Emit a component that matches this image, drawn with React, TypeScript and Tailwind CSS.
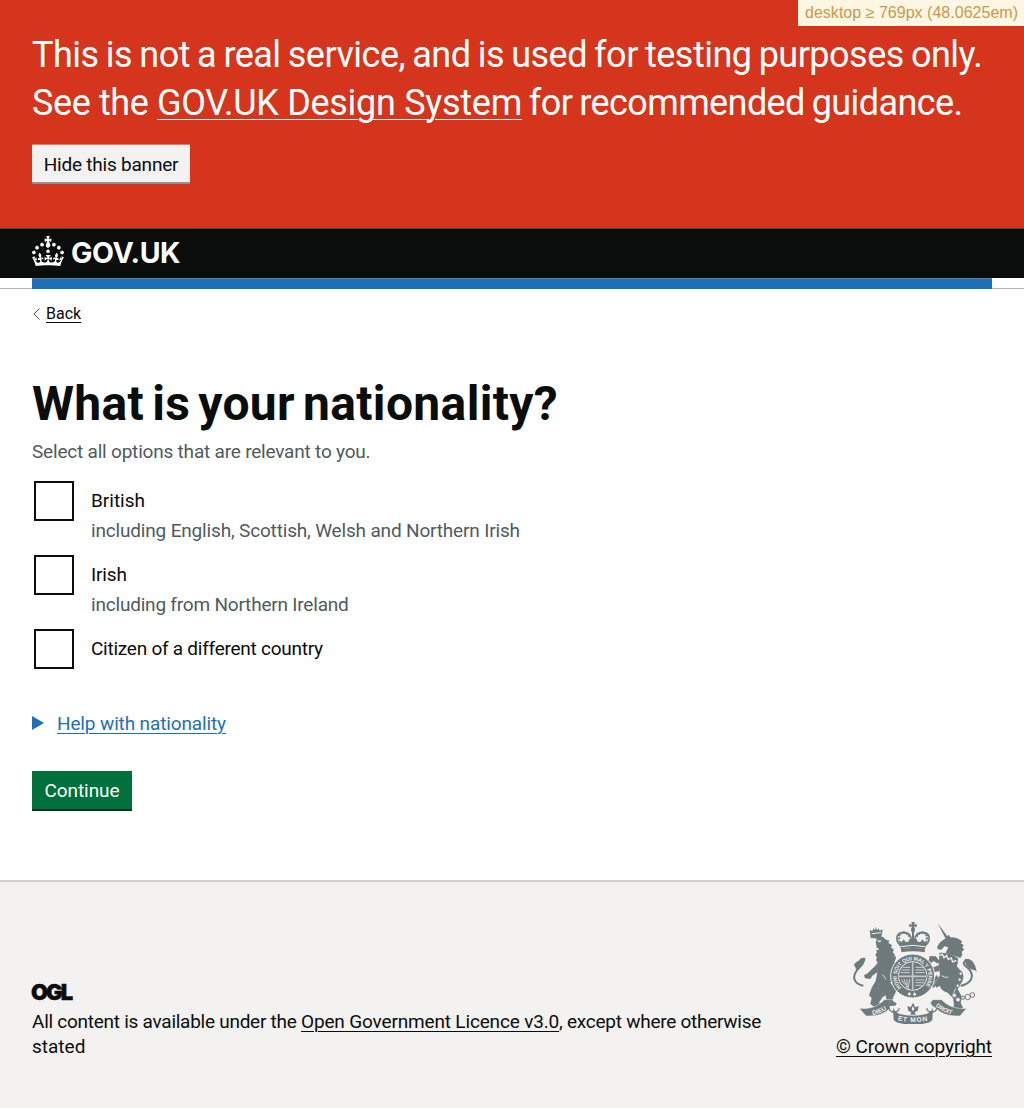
import type { ReactNode } from "react";

function Crown() {
  return (
    <svg viewBox="0 0 32 30" className="h-[30px] w-8 shrink-0" fill="currentColor" aria-hidden="true">
      <path d="M22.6 10.4c-1 .4-2-.1-2.4-1-.4-.9.1-2 1-2.4.9-.4 2 .1 2.4 1s-.1 2-1 2.4m-5.9 6.7c-.9.4-2-.1-2.4-1-.4-.9.1-2 1-2.4.9-.4 2 .1 2.4 1s-.1 2-1 2.4m10.8-3.7c-1 .4-2-.1-2.4-1-.4-.9.1-2 1-2.4.9-.4 2 .1 2.4 1s0 2-1 2.4m3.3 4.8c-1 .4-2-.1-2.4-1-.4-.9.1-2 1-2.4.9-.4 2 .1 2.4 1s-.1 2-1 2.4M17 4.7l2.3 1.2V2.5l-2.3.7-.2-.2.9-3h-3.4l.9 3-.2.2c-.1.1-2.3-.7-2.3-.7v3.4L15 4.7c.1.1.1.2.2.2l-1.3 4c-.1.2-.1.4-.1.6 0 1.1.8 2 1.9 2.2h.7c1-.2 1.9-1.1 1.9-2.1 0-.2 0-.4-.1-.6l-1.3-4c-.1-.2 0-.2.1-.3m-7.6 5.7c.9.4 2-.1 2.4-1 .4-.9-.1-2-1-2.4-.9-.4-2 .1-2.4 1s0 2 1 2.4m-5 3c.9.4 2-.1 2.4-1 .4-.9-.1-2-1-2.4-.9-.4-2 .1-2.4 1s.1 2 1 2.4m-3.2 4.8c.9.4 2-.1 2.4-1 .4-.9-.1-2-1-2.4-.9-.4-2 .1-2.4 1s0 2 1 2.4m14.8 11c4.4 0 8.6.3 12.3.8 1.1-4.5 2.4-7 3.7-8.8l-2.5-.9c.2 1.3.3 1.9 0 2.7-.4-.4-.8-1.1-1.1-2.3l-1.2 4c.7-.5 1.3-.8 2-.9-1.1 2.5-2.6 3.1-3.5 3-1.1-.2-1.7-1.2-1.5-2.1.3-1.2 1.5-1.5 2.1-.1 1.1-2.3-.8-3-2-2.3 1.9-1.9 2.1-3.5.6-5.6-2.1 1.6-2.1 3.2-1.2 5.5-1.2-1.4-3.2-.6-2.5 1.6.9-1.4 2.1-.5 1.9.8-.2 1.1-1.7 2.1-3.5 1.9-2.7-.2-2.9-2.1-2.9-3.6.7-.1 1.9.5 2.9 1.9l.4-4.3c-1.1 1.1-2.1 1.4-3.2 1.4.4-1.2 2.1-3 2.1-3h-5.4s1.7 1.9 2.1 3c-1.1 0-2.1-.2-3.2-1.4l.4 4.3c1-1.4 2.2-2 2.9-1.9-.1 1.5-.2 3.4-2.9 3.6-1.9.2-3.4-.8-3.5-1.9-.2-1.3 1-2.2 1.9-.8.7-2.3-1.2-3-2.5-1.6.9-2.2.9-3.9-1.2-5.5-1.5 2-1.3 3.7.6 5.6-1.2-.7-3.1 0-2 2.3.6-1.4 1.8-1.1 2.1.1.2.9-.3 1.9-1.5 2.1-.9.2-2.4-.5-3.5-3 .6 0 1.2.3 2 .9l-1.2-4c-.3 1.1-.7 1.9-1.1 2.3-.3-.8-.2-1.4 0-2.7l-2.9.9C1.3 23 2.6 25.5 3.7 30c3.7-.5 7.9-.8 12.3-.8" />
    </svg>
  );
}

const arcDots = [
  [166, 62], [172, 56], [180, 54], [188, 57], [195, 63], [219, 63], [226, 57], [234, 54], [242, 56], [248, 62],
  [165, 71], [249, 71], [207, 58], [207, 66],
];

/* Royal coat of arms: lion, crowned garter shield, unicorn and motto scroll. */
function CoatOfArms() {
  return (
    <svg viewBox="24 22 375 306" className="h-[102px] w-[125px]" fill="#6f7a7c" aria-hidden="true">
      {/* Imperial crown */}
      <path d="M202 22h11l-3 8 8-3v11l-8-3 3 9h-12l3-9-8 3V27l8 3z" />
      <circle cx="207" cy="47" r="6" />
      <g fill="none" stroke="#6f7a7c">
        <path d="M168 92C150 70 160 54 177 53c13-1 22 8 25 19M246 92c18-22 8-38-9-39-13-1-22 8-25 19" strokeWidth="5" />
        <path d="M207 50v40" strokeWidth="6" />
      </g>
      {arcDots.map(([x, y]) => <circle key={`${x}-${y}`} cx={x} cy={y} r="3.6" />)}
      <path d="m164 76 9 6 6-8 6 8 8-1 4-9h20l4 9 8 1 6-8 6 8 9-6-7 28q-36-8-72 0z" />
      <path d="M171 96q36-8 72 0" fill="none" stroke="#f3f2f1" strokeWidth="3" />
      <path d="M171 104q36-8 72 0l-1 9q-35-7-70 0z" />
      {/* Lion */}
      <path d="m77 45 8 5 3-9 5 6 2-10 4 10 5-6 3 7 9-4-4 24-32 3z" />
      <path d="m83 57 28-3" stroke="#f3f2f1" strokeWidth="3" />
      <path d="M81 69c9-5 25-6 36-2l10 9 9 1-3 7 11 8-3 6 9 8-4 6 7 9-5 5 6 10-3 6 6 8-4 6 4 10-6 4 2 12-6 2-2 12-6 8 10 12 8 10-3 9-6 12-2 12 12 7-4 7-25 1-7-8 6-6-3-18-9 5-11 17 9 10-5 7-18-4-12-9 4-18-8-8 8-23 12-20 5-26-15 10-6 10-16-2-3-9 11-6 20-20 10-11-5-10 3-6-5-9 5-7-4-10 3-7-3-14 4-10z" />
      <path d="m84 83 8-2 1 4-8 2zM100 78l10-1 1 4-9 1zM87 98l14 1 4 8-10-2z" fill="#f3f2f1" />
      <path d="M82 215l-14 20M116 180l10 14" fill="none" stroke="#f3f2f1" strokeWidth="2.5" />
      <path d="M58 213c-26-5-34-23-22-42 12-16 22-20 15-27-6-6-16 1-19 10" fill="none" stroke="#6f7a7c" strokeWidth="6" />
      <path d="M43 142c2-12 14-15 21-12-1 18-11 28-27 35-6-7-4-15 6-23z" />
      <path d="M130 134c12-1 18-6 24-12l2 10-14 18-12 2zM126 182l14-6 12 10-6 10-16-2z" />
      {/* Unicorn */}
      <path d="m281 26 30 40-7 5z" />
      <path d="M303 72 314 60l5 8c14 0 28 4 36 14l-5 4 9 5-4 8 6 5-8 8 2 8-6 10-44-16 8-16-11-3-10 10-10-1-3-7 10-15z" />
      <path d="M286 115c20-3 40 4 56 16l-1 16-4 10c-14-8-30-12-52-10z" />
      <path d="m286 122 9-3 5 10 8-6 5 12 9-5 4 12 11-5" fill="none" stroke="#f3f2f1" strokeWidth="4" />
      <path d="M283 138c20-5 42 1 54 15l12 14c9 8 12 20 6 33l-14 23 13 24-4 17 7 15-15 13-17-8 5-12-3-22-18-17c-13-4-18-10-22-20l-9 6-8-10 10-14 8-14z" />
      <path d="m257 124 18 1 12 14-6 8-12-8-8 6-7-5zM262 160l22-8 4 16-22 6-5 9-8-4zM284 190l-13 15 2 12-6 2-6-14 17-24z" />
      <path d="M313 188q-13 1-20-5M335 221l-10 22" fill="none" stroke="#f3f2f1" strokeWidth="2.5" />
      <path d="M350 214c34-9 40-29 28-47-9-14-26-16-16-27 9-9 22 0 25 9" fill="none" stroke="#6f7a7c" strokeWidth="6" />
      <path d="M362 134c18-4 32 9 36 37-8-8-14-4-22-11-9-7-14-13-14-26z" />
      {/* Garter and shield */}
      <circle cx="206" cy="184" r="66" stroke="#f3f2f1" strokeWidth="3" />
      <circle cx="206" cy="184" r="43" stroke="#f3f2f1" strokeWidth="3" />
      <g fill="none" stroke="#d0d3d2" strokeWidth="3">
        <path d="M176 158h22M172 166h26M170 174h28M214 158h24M214 166h27M214 174h28M214 196h28M214 204h26M214 212h20" />
        <path d="M173 195l9 14M180 193l8 24M189 193v29M197 193l-5 30" />
      </g>
      <path d="M206 142v84M164 185h84" stroke="#6f7a7c" strokeWidth="11" />
      <path d="M206 142v84M164 185h84" stroke="#c3c7c6" strokeWidth="5" />
      <path id="garter" d="M168 222A53 53 0 1 1 244 222" fill="none" />
      <text fill="#f3f2f1" fontFamily="Liberation Sans" fontSize="16" fontWeight="700" dy="5">
        <textPath href="#garter" textLength="240">HONI SOIT QUI MAL Y PENSE</textPath>
      </text>
      <path d="m191 238 5-6 5 6-5 6zM207 239l5-6 5 6-5 6z" fill="#f3f2f1" />
      {/* Unicorn's chain */}
      <g fill="#f3f2f1" stroke="#6f7a7c" strokeWidth="3">
        <circle cx="350" cy="177" r="5" /><circle cx="347" cy="195" r="5" /><circle cx="341" cy="213" r="5" />
        <circle cx="331" cy="242" r="7" /><circle cx="342" cy="255" r="7" /><circle cx="357" cy="249" r="5" />
        <circle cx="371" cy="247" r="8" /><circle cx="385" cy="241" r="7" />
      </g>
      {/* Emblem under the shield */}
      <path d="m207 264 7 14 10-4-3 15-9 3 3 8h-16l3-8-9-3-3-15 10 4z" />
      <path d="m207 273 4 10-4 7-4-7z" fill="#f3f2f1" />
      {/* Motto scroll */}
      <path d="M46 281c32 3 56-6 75-26h26q-18 12-9 26-24 26-72 23zM368 281c-32 3-56-6-75-26h-26q-18 12 9 26 24 26 72 23z" stroke="#f3f2f1" strokeWidth="1.5" />
      <path d="M145 257c-14 12-14 30 2 35 10 2 20-4 18-12M269 257c14 12 14 30-2 35-10 2-20-4-18-12" fill="none" stroke="#6f7a7c" strokeWidth="4" />
      <path d="M147 278q4 14 20 20 40 10 80 0 16-6 20-20l-2 38-8 7q-50 14-100 0l-8-7z" />
      <path id="motto-left" d="M86 301Q121 295 150 266" fill="none" />
      <path id="motto-right" d="M275 275Q298 296 340 303" fill="none" />
      <path id="motto-centre" d="M161 317Q207 328 262 316" fill="none" />
      <g fill="#f3f2f1" fontFamily="Liberation Sans" fontWeight="700">
        <text fontSize="19"><textPath href="#motto-left">DIEU</textPath></text>
        <text fontSize="18"><textPath href="#motto-right" textLength="54">DROIT</textPath></text>
        <text fontSize="20"><textPath href="#motto-centre" textLength="90">ET MON</textPath></text>
      </g>
    </svg>
  );
}

function Option({ label, hint, tracking, hintTracking }: { label: string; hint?: string; tracking: string; hintTracking?: string }) {
  return (
    <div className="flex gap-[17px] pl-0.5">
      <span className="size-10 shrink-0 border-2 border-[#0b0c0c]" role="checkbox" aria-checked="false" aria-label={label} />
      <div>
        <p className={`mt-[7px] whitespace-nowrap ${tracking}`}>{label}</p>
        {hint && <p className={`mt-[5px] whitespace-nowrap text-[#505a5f] ${hintTracking}`}>{hint}</p>}
      </div>
    </div>
  );
}

function Link({ children, className }: { children: ReactNode; className: string }) {
  return <a href="#" className={`underline decoration-1 ${className}`}>{children}</a>;
}

export default function App() {
  return (
    <div className="flex h-[1108px] w-[1024px] flex-col overflow-hidden bg-white font-['Roboto','Noto_Sans',sans-serif] text-[19px] leading-[25px] text-[#0b0c0c]">
      <div className="relative h-[228px] bg-[#d4351c] px-8 pt-[31px] text-white">
        <div className="absolute top-0 right-0 h-[26px] w-[226px] bg-[#fdf6e3] pl-[7px] font-['Liberation_Sans',sans-serif] text-base leading-[25px] tracking-[0.02px] whitespace-nowrap text-[#c49b50]">
          desktop ≥ 769px (48.0625em)
        </div>
        <p className="text-[36px] leading-12 whitespace-nowrap">
          <span className="tracking-[-0.52px] [word-spacing:-1.2px]">This is not a real service, and is used for testing purposes only.</span>
          <br />
          <span className="tracking-[-0.39px]">See the </span>
          <Link className="tracking-[-0.29px] underline-offset-4">GOV.UK Design System</Link>
          <span className="tracking-[-0.6px] [word-spacing:-1.4px]"> for recommended guidance.</span>
        </p>
        <button className="mt-[18px] block h-[39px] w-[158px] border-b-2 border-[#929191] bg-[#f3f2f1] pt-0.5 text-center tracking-[-0.22px] text-[#0b0c0c] shadow-[0_-1px_0_#e27b6b]">
          Hide this banner
        </button>
      </div>
      <header className="flex h-[50px] items-start border-t border-[#53453f] bg-[#0b0c0c] px-8 pt-[7px] text-white">
        <Crown />
        <span className="ml-[7px] font-['Inter',sans-serif] text-[28.5px] leading-[33px] font-bold tracking-[-0.4px]">GOV.UK</span>
      </header>
      <div className="h-[11px] border-b border-[#b1b4b6] px-8">
        <div className="h-[11px] border-t border-[#5f7f99] bg-[#1d70b8]" />
      </div>
      <main className="h-[591px] px-8 pt-[15px]">
        <div className="flex items-center text-base leading-5">
          <svg viewBox="0 0 14 14" className="h-3.5 w-3.5" fill="none" stroke="#505a5f" aria-hidden="true">
            <path d="M7.5 1.5 2 7l5.5 5.5" />
          </svg>
          <Link className="underline-offset-3">Back</Link>
        </div>
        <h1 className="mt-[55px] text-[48px] leading-[50px] font-bold tracking-[0.35px] [word-spacing:-4.3px]">What is your nationality?</h1>
        <p className="mt-2.5 tracking-[-0.2px] text-[#505a5f]">Select all options that are relevant to you.</p>
        <div className="mt-[17px] flex flex-col gap-3">
          <Option label="British" tracking="" hint="including English, Scottish, Welsh and Northern Irish" hintTracking="tracking-[-0.17px]" />
          <Option label="Irish" tracking="tracking-[-0.15px]" hint="including from Northern Ireland" hintTracking="tracking-[-0.2px]" />
          <Option label="Citizen of a different country" tracking="tracking-[-0.25px]" />
        </div>
        <div className="mt-[42px] flex text-[#1d70b8]">
          <svg viewBox="0 0 12 14" className="mt-[5px] mr-[13px] h-3.5 w-3" fill="currentColor" aria-hidden="true">
            <path d="M0 0 12 7 0 14z" />
          </svg>
          <Link className="tracking-[-0.13px] underline-offset-3">Help with nationality</Link>
        </div>
        <button className="mt-[35px] block h-10 w-[100px] border-b-2 border-[#003d20] bg-[#00703c] pt-px text-center tracking-[-0.08px] text-white">Continue</button>
      </main>
      <footer className="flex h-[228px] items-end justify-between border-t-2 border-[#cecece] bg-[#f3f2f1] px-8 pb-[49px]">
        <div>
          <div className="mb-[9px] -ml-px font-['Inter',sans-serif] text-[22px] leading-4 font-black tracking-[-2px] [-webkit-text-stroke:0.4px]">OGL</div>
          <p className="whitespace-nowrap">
            <span className="tracking-[-0.26px]">All content is available under the </span>
            <Link className="tracking-[-0.16px] underline-offset-3">Open Government Licence v3.0</Link>
            <span className="tracking-[-0.26px]">, except where otherwise</span>
            <br />
            stated
          </p>
        </div>
        <div className="flex flex-col items-end">
          <div className="mr-[15px] mb-2.5"><CoatOfArms /></div>
          <Link className="tracking-[-0.08px] underline-offset-3">© Crown copyright</Link>
        </div>
      </footer>
    </div>
  );
}
